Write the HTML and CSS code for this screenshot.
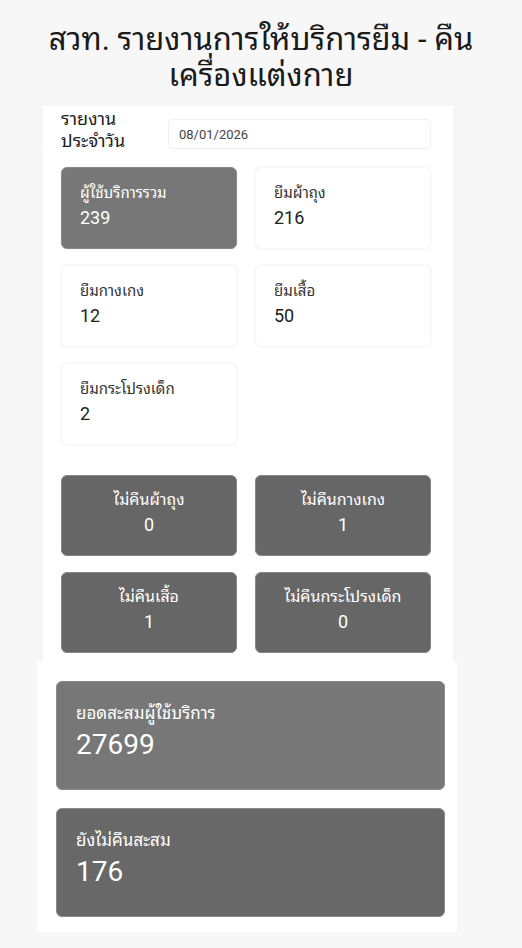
FILE: index.html
```html
<!DOCTYPE html>
<html lang="th">
<head>
<meta charset="utf-8">
<title>สวท. รายงานการให้บริการยืม - คืน เครื่องแต่งกาย</title>
<link rel="stylesheet" href="styles.css">
</head>
<body>
<h1 class="title">สวท. รายงานการให้บริการยืม - คืน<br>เครื่องแต่งกาย</h1>

<section class="panel daily">
  <div class="date-row">
    <label class="date-label" for="d">รายงาน<br>ประจำวัน</label>
    <div class="date-input" id="d">08/01/2026</div>
  </div>

  <div class="stat-grid">
    <div class="stat stat-active"><div class="stat-label">ผู้ใช้บริการรวม</div><div class="stat-value">239</div></div>
    <div class="stat"><div class="stat-label">ยืมผ้าถุง</div><div class="stat-value">216</div></div>
    <div class="stat"><div class="stat-label">ยืมกางเกง</div><div class="stat-value">12</div></div>
    <div class="stat"><div class="stat-label">ยืมเสื้อ</div><div class="stat-value">50</div></div>
    <div class="stat"><div class="stat-label">ยืมกระโปรงเด็ก</div><div class="stat-value">2</div></div>
  </div>

  <div class="return-grid">
    <div class="ret"><div class="ret-label">ไม่คืนผ้าถุง</div><div class="ret-value">0</div></div>
    <div class="ret"><div class="ret-label">ไม่คืนกางเกง</div><div class="ret-value">1</div></div>
    <div class="ret"><div class="ret-label">ไม่คืนเสื้อ</div><div class="ret-value">1</div></div>
    <div class="ret"><div class="ret-label">ไม่คืนกระโปรงเด็ก</div><div class="ret-value">0</div></div>
  </div>
</section>

<section class="panel totals">
  <div class="total total-users"><div class="total-label">ยอดสะสมผู้ใช้บริการ</div><div class="total-value">27699</div></div>
  <div class="total total-missing"><div class="total-label">ยังไม่คืนสะสม</div><div class="total-value">176</div></div>
</section>
</body>
</html>
```

FILE: styles.css
```css
* { box-sizing: border-box; }

body {
  margin: 0;
  background: #f7f7f7;
  font-family: Roboto, "Noto Sans Thai Looped", "Loma", "Garuda", "Waree", "Noto Sans Thai", "Noto Sans", sans-serif;
  color: #222;
}

.title {
  margin: 22px 0 12px;
  font-size: 31px;
  font-weight: 400;
  line-height: 36px;
  text-align: center;
  color: #1a1a1a;
}

.panel {
  background: #fff;
}

.daily {
  margin-left: 43px;
  width: 410px;
  padding: 2px 22px 9px 18px;
}

.date-row {
  display: flex;
  align-items: center;
  height: 52px;
}

.date-label {
  align-self: flex-start;
  width: 107px;
  font-size: 18px;
  line-height: 22px;
  color: #222;
}

.date-input {
  flex: 1;
  height: 30px;
  border: 1px solid #f0f0f0;
  border-radius: 4px;
  padding: 0 10px;
  display: flex;
  align-items: center;
  font-family: Roboto, "Liberation Sans", sans-serif;
  font-size: 13px;
  color: #444;
}

.stat-grid,
.return-grid {
  display: grid;
  grid-template-columns: 176px 176px;
  column-gap: 18px;
}

.stat-grid {
  margin-top: 7px;
  row-gap: 16px;
}

.stat {
  height: 82px;
  border-radius: 6px;
  background: #fff;
  box-shadow: 0 0 3px rgba(0, 0, 0, 0.06);
  border: 1px solid #f6f6f6;
  padding: 13px 18px;
}

.stat-label {
  font-size: 15px;
  line-height: 24px;
  color: #333;
}

.stat-value {
  font-size: 18px;
  line-height: 26px;
  color: #222;
}

.stat-active {
  background: #777;
  border-color: #8a8a8a;
}

.stat-active .stat-label,
.stat-active .stat-value {
  color: #fff;
}

.return-grid {
  margin-top: 30px;
  row-gap: 16px;
}

.ret {
  height: 81px;
  border-radius: 6px;
  background: #666;
  border: 1px solid #858585;
  text-align: center;
  color: #fff;
  padding-top: 12px;
}

.ret-label {
  font-size: 16px;
  line-height: 24px;
}

.ret-value {
  font-size: 18px;
  line-height: 26px;
}

.totals {
  margin-left: 37px;
  width: 420px;
  padding: 19px 12px 15px 19px;
  display: flex;
  flex-direction: column;
  gap: 18px;
}

.total {
  height: 109px;
  border-radius: 6px;
  border: 1px solid #8a8a8a;
  color: #fff;
  padding: 18px 19px;
}

.total-users { background: #777; }
.total-missing { background: #686868; }

.total-label {
  font-size: 17px;
  line-height: 26px;
}

.total-value {
  font-size: 28px;
  line-height: 38px;
}
```
